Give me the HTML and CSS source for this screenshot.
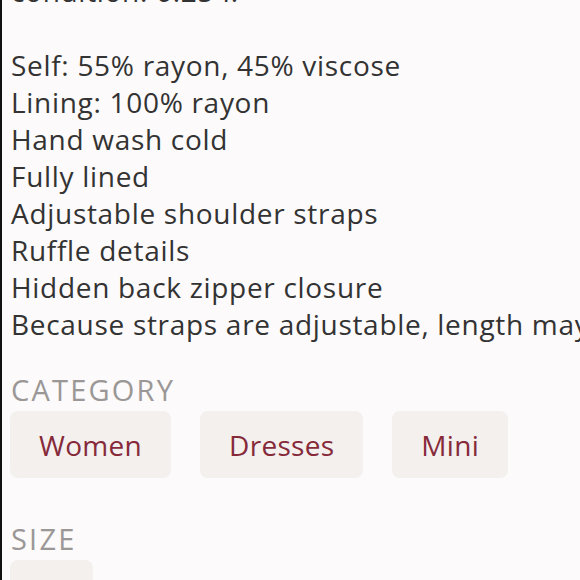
FILE: index.html
```html
<!DOCTYPE html>
<html>
<head>
<meta charset="utf-8">
<link rel="stylesheet" href="styles.css">
</head>
<body>
<div class="page">
  <div class="description">
    <p class="line">condition: 0.25 I.</p>
    <p class="line">&nbsp;</p>
    <p class="line">Self: 55% rayon, 45% viscose</p>
    <p class="line">Lining: 100% rayon</p>
    <p class="line">Hand wash cold</p>
    <p class="line">Fully lined</p>
    <p class="line">Adjustable shoulder straps</p>
    <p class="line">Ruffle details</p>
    <p class="line">Hidden back zipper closure</p>
    <p class="line">Because straps are adjustable, length may vary.</p>
  </div>
  <section class="group">
    <h3 class="label">CATEGORY</h3>
    <div class="chips">
      <span class="chip">Women</span>
      <span class="chip">Dresses</span>
      <span class="chip">Mini</span>
    </div>
  </section>
  <section class="group group-size">
    <h3 class="label">SIZE</h3>
    <div class="chips">
      <span class="chip chip-size">&nbsp;</span>
    </div>
  </section>
</div>
</body>
</html>
```
FILE: styles.css
```css
html, body {
  margin: 0;
  padding: 0;
  background: #fcfafa;
  overflow: hidden;
}
.page {
  border-left: 2px solid #111;
  min-height: 600px;
  padding-left: 8px;
  overflow: hidden;
  font-family: "Open Sans", "Noto Sans", sans-serif;
  color: #333;
}
.description {
  margin-top: -27px;
  white-space: nowrap;
}
.line {
  margin: 0;
  padding-left: 1px;
  font-size: 28px;
  letter-spacing: 0.7px;
  line-height: 37px;
}
.group {
  margin-top: 32px;
}
.group-size {
  margin-top: 46px;
}
.label {
  margin: 0 0 6px 1px;
  font-size: 29px;
  font-weight: 400;
  letter-spacing: 2.2px;
  line-height: 30px;
  color: #9a9796;
}
.chips {
  display: flex;
  gap: 29px;
}
.chip {
  background: #f3f0ee;
  border-radius: 8px;
  height: 67px;
  padding: 0 29px;
  display: flex;
  align-items: center;
  font-size: 28px;
  letter-spacing: 0.3px;
  color: #862a3a;
}
.chip-size {
  width: 83px;
  padding: 0;
}
```
